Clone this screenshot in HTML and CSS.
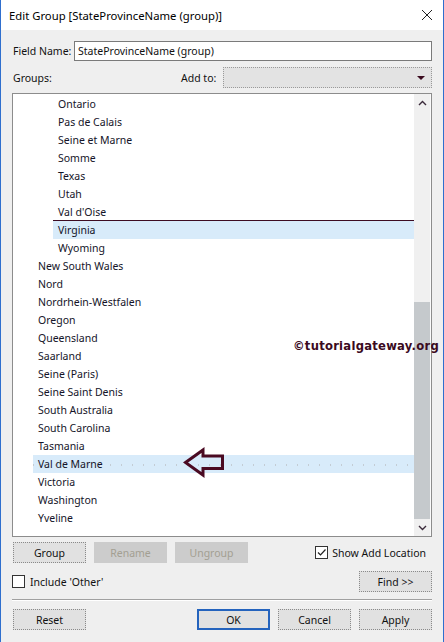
FILE: index.html
```html
<!DOCTYPE html>
<html>
<head>
<meta charset="utf-8">
<link rel="stylesheet" href="styles.css">
</head>
<body>
<div class="window">
  <div class="titlebar">
    <span class="title">Edit Group [StateProvinceName (group)]</span>
    <svg class="close" width="12" height="12" viewBox="0 0 12 12"><path d="M1 1L11 11M11 1L1 11" stroke="#222" stroke-width="1" fill="none"/></svg>
  </div>
  <div class="content">
    <div class="row field-row">
      <label class="lbl field-lbl">Field Name:</label>
      <div class="input">StateProvinceName (group)</div>
    </div>
    <div class="row groups-row">
      <span class="lbl groups-lbl">Groups:</span>
      <span class="lbl addto-lbl">Add to:</span>
      <div class="dropdown">
        <svg width="8" height="4" viewBox="0 0 8 4"><path d="M0 0H8L4 4Z" fill="#3a0a1e"/></svg>
      </div>
    </div>
    <div class="listbox">
      <div class="list">
        <div class="item inner">Ontario</div>
        <div class="item inner">Pas de Calais</div>
        <div class="item inner">Seine et Marne</div>
        <div class="item inner">Somme</div>
        <div class="item inner">Texas</div>
        <div class="item inner">Utah</div>
        <div class="item inner">Val d'Oise</div>
        <div class="item inner sel drop">Virginia</div>
        <div class="item inner">Wyoming</div>
        <div class="item">New South Wales</div>
        <div class="item">Nord</div>
        <div class="item">Nordrhein-Westfalen</div>
        <div class="item">Oregon</div>
        <div class="item">Queensland</div>
        <div class="item">Saarland</div>
        <div class="item">Seine (Paris)</div>
        <div class="item">Seine Saint Denis</div>
        <div class="item">South Australia</div>
        <div class="item">South Carolina</div>
        <div class="item">Tasmania</div>
        <div class="item sel dotted">Val de Marne</div>
        <div class="item">Victoria</div>
        <div class="item">Washington</div>
        <div class="item">Yveline</div>
      </div>
      <div class="scrollbar">
        <div class="sb-btn"><svg width="9" height="6" viewBox="0 0 9 6"><path d="M1 5L4.5 1.5L8 5" stroke="#3a2a3a" stroke-width="1.4" fill="none"/></svg></div>
        <div class="sb-track"></div>
        <div class="sb-thumb"></div>
        <div class="sb-btn"><svg width="9" height="6" viewBox="0 0 9 6"><path d="M1 1L4.5 4.5L8 1" stroke="#3a2a3a" stroke-width="1.4" fill="none"/></svg></div>
      </div>
      <div class="watermark">©tutorialgateway.org</div>
      <svg class="pointer" width="42" height="31" viewBox="0 0 42 31"><path d="M2.5 15.5L20 3V9H39.5V21.5H20V28Z" fill="none" stroke="#4a0a22" stroke-width="3" stroke-linejoin="miter"/></svg>
    </div>
    <div class="row btn-row1">
      <button class="btn">Group</button>
      <button class="btn disabled">Rename</button>
      <button class="btn disabled">Ungroup</button>
      <span class="spacer"></span>
      <span class="check checked"><svg width="11" height="11" viewBox="0 0 11 11"><path d="M2 5.5L4.5 8L9.5 2.5" stroke="#222" stroke-width="1.2" fill="none"/></svg></span>
      <span class="lbl check-lbl">Show Add Location</span>
    </div>
    <div class="row btn-row2">
      <span class="check"></span>
      <span class="lbl check-lbl2">Include 'Other'</span>
      <span class="spacer"></span>
      <button class="btn">Find &gt;&gt;</button>
    </div>
    <div class="separator"></div>
    <div class="row btn-row3">
      <button class="btn">Reset</button>
      <span class="spacer"></span>
      <button class="btn ok">OK</button>
      <button class="btn">Cancel</button>
      <button class="btn">Apply</button>
    </div>
  </div>
</div>
</body>
</html>
```
FILE: styles.css
```css
* { box-sizing: border-box; }
html, body { margin: 0; padding: 0; }
body {
  font-family: "Noto Sans", "Liberation Sans", sans-serif;
  font-size: 10.5px;
  color: #111;
}
.window {
  width: 444px;
  height: 642px;
  background: #efefef;
  border-left: 1px solid #2f6fce;
  border-right: 1px solid #2f6fce;
  overflow: hidden;
}
.titlebar {
  height: 30px;
  background: #fff;
  display: flex;
  align-items: center;
  padding: 0 10px 0 8px;
}
.title { font-size: 11.3px; color: #000; flex: 1; padding-top: 1px; }
.content { padding: 0 11px; }
.row { display: flex; align-items: center; }
.lbl { white-space: nowrap; flex-shrink: 0; }
.field-row { margin-top: 11px; height: 20px; }
.field-lbl { width: 62px; padding-left: 1px; }
.input {
  flex: 1;
  height: 20px;
  border: 1px solid #7a7a7a;
  background: #fff;
  padding: 0 3px;
  line-height: 18px;
  white-space: nowrap;
}
.groups-row { margin-top: 6px; height: 21px; }
.groups-lbl { width: 169px; padding-left: 1px; }
.addto-lbl { width: 42px; }
.dropdown {
  flex: 1;
  height: 21px;
  background: #e3e3e3;
  border: 1px dotted #9a9a9a;
  display: flex;
  align-items: center;
  justify-content: flex-end;
  padding-right: 6px;
}
.listbox {
  position: relative;
  margin-top: 5px;
  height: 444px;
  border: 1px solid #8c8c8c;
  background: #fff;
  display: flex;
}
.list { flex: 1; padding-top: 1px; }
.item {
  height: 18px;
  line-height: 18px;
  margin-left: 20px;
  padding-left: 5px;
  white-space: nowrap;
  color: #141428;
}
.item.inner { margin-left: 40px; }
.item.sel { background: #d8ebfa; }
.item.drop { box-shadow: 0 -1px 0 #3d0c22; }
.item.dotted {
  background-image: radial-gradient(circle, #c3ccd4 0.6px, transparent 0.8px);
  background-size: 11px 18px;
  background-position: 160px 1px;
  background-color: #d8ebfa;
}
.scrollbar {
  width: 17px;
  display: flex;
  flex-direction: column;
  background: #f0f0f0;
  border-right: 1px solid #fafafa;
}
.sb-btn {
  height: 17px;
  display: flex;
  align-items: center;
  justify-content: center;
  background: #f0f0f0;
}
.sb-track { height: 191px; }
.sb-thumb { flex: 1; background: #c5c9cc; }
.watermark {
  position: absolute;
  left: 280px;
  top: 245px;
  font-family: "DejaVu Sans", sans-serif;
  font-weight: bold;
  font-size: 11.6px;
  letter-spacing: 0.25px;
  color: #3b0a1e;
  white-space: nowrap;
}
.pointer {
  position: absolute;
  left: 170px;
  top: 353px;
}
.btn {
  width: 73px;
  height: 21px;
  background: #e1e1e1;
  border: 1px dotted #8a8a8a;
  font-family: inherit;
  font-size: 10.5px;
  color: #111;
  padding: 0;
  margin: 0;
  flex-shrink: 0;
}
.btn.disabled { background: #cccccc; color: #a39f92; border-color: #cccccc; }
.btn-row1 { margin-top: 5px; height: 21px; padding-left: 1px; gap: 8px; }
.spacer { flex: 1; }
.check {
  width: 13px;
  height: 13px;
  border: 1px solid #333;
  background: #fff;
  display: inline-flex;
  align-items: center;
  justify-content: center;
  flex-shrink: 0;
}
.btn-row1 .check { margin-right: -4px; }
.check-lbl { margin-right: 6px; }
.btn-row2 { margin-top: 8px; height: 21px; }
.check-lbl2 { margin-left: 5px; }
.separator {
  margin-top: 7px;
  height: 2px;
  border-top: 1px solid #a0a0a0;
  border-bottom: 1px solid #fff;
}
.btn-row3 { margin-top: 8px; height: 21px; padding-left: 1px; gap: 8px; }
.btn.ok { border: 2px solid #2463bd; }
```
